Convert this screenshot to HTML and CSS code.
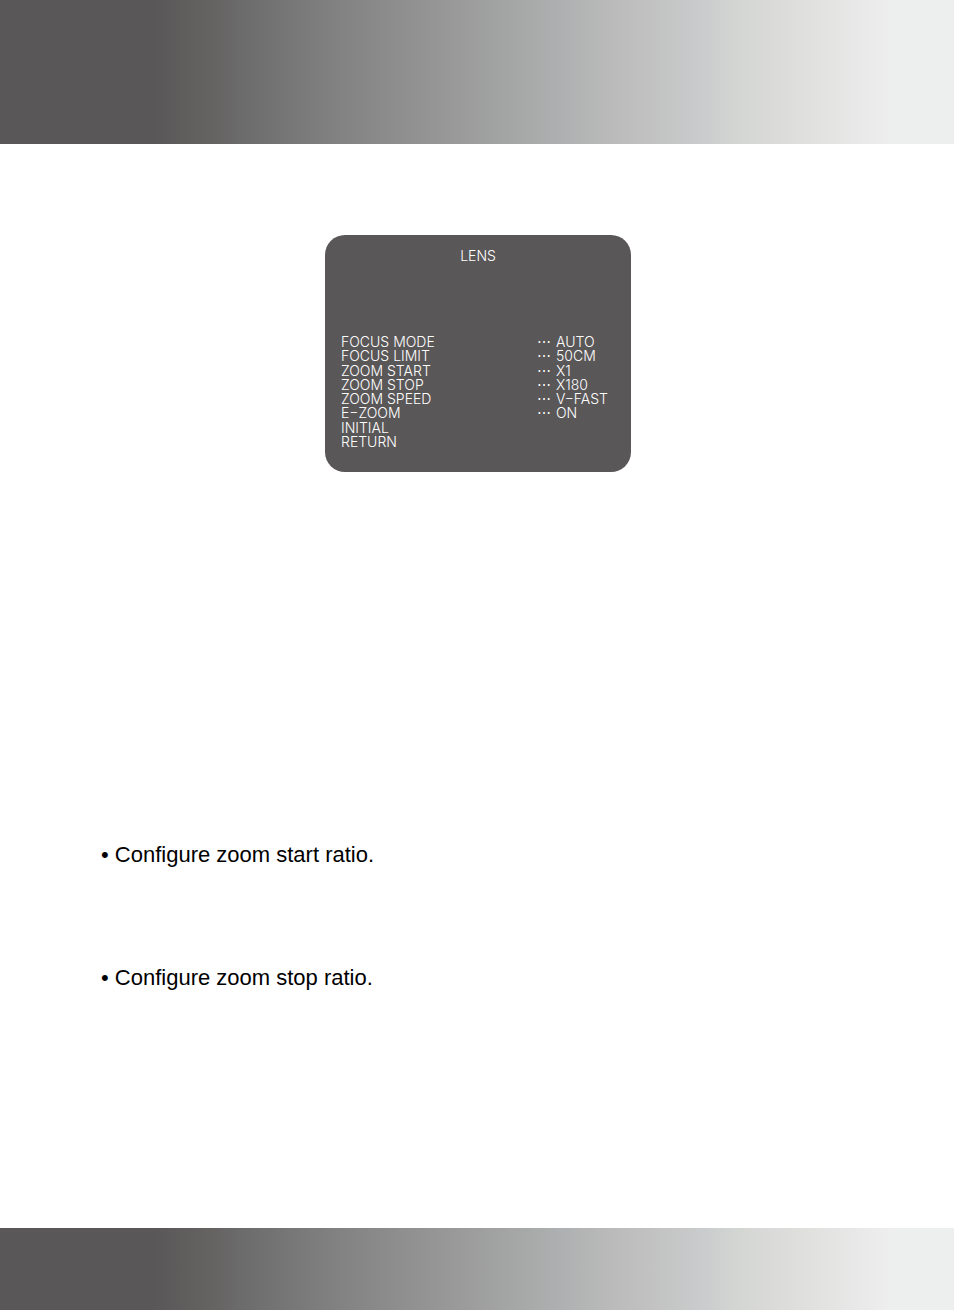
FILE: index.html
```html
<!DOCTYPE html>
<html lang="en">
<head>
  <meta charset="UTF-8" />
  <meta name="viewport" content="width=device-width, initial-scale=1.0" />
  <title>Lens</title>
  <link rel="stylesheet" href="styles.css">
</head>
<body>
  <header class="band band-top"></header>

  <main class="page">
    <section class="menu">
      <h1 class="menu-title">LENS</h1>
      <table class="menu-table">
        <tr><th scope="row">FOCUS MODE</th><td class="dots">⋯</td><td>AUTO</td></tr>
        <tr><th scope="row">FOCUS LIMIT</th><td class="dots">⋯</td><td>50CM</td></tr>
        <tr><th scope="row">ZOOM START</th><td class="dots">⋯</td><td>X1</td></tr>
        <tr><th scope="row">ZOOM STOP</th><td class="dots">⋯</td><td>X180</td></tr>
        <tr><th scope="row">ZOOM SPEED</th><td class="dots">⋯</td><td>V−FAST</td></tr>
        <tr><th scope="row">E−ZOOM</th><td class="dots">⋯</td><td>ON</td></tr>
        <tr><th scope="row">INITIAL</th><td></td><td></td></tr>
        <tr><th scope="row">RETURN</th><td></td><td></td></tr>
      </table>
    </section>

    <div class="notes">
      <p>• Configure zoom start ratio.</p>
      <p>• Configure zoom stop ratio.</p>
    </div>
  </main>

  <footer class="band band-bottom"></footer>
</body>
</html>
```
FILE: styles.css
```css
body {
  margin: 0;
  min-height: 100vh;
  display: flex;
  flex-direction: column;
  background: white;
  color: black;
  font-family: "Liberation Sans", Arial, sans-serif;
}
.band {
  background: linear-gradient(to right,
    #5a5758 0%,
    #5a5758 16%,
    #676464 23%,
    #6b6b6b 25%,
    #838383 36%,
    #989898 47%,
    #a9aaaa 56%,
    #afb0b1 59%,
    #bcbcbc 65%,
    #cbcccd 74%,
    #d3d5d3 77%,
    #dfdfde 84%,
    #edecec 92%,
    #edefee 94%,
    #edefee 100%);
}
.band-top {
  height: 144px;
}
.band-bottom {
  height: 82px;
}
.page {
  flex: 1;
  padding: 91px 99px 0 101px;
}
.menu {
  box-sizing: border-box;
  width: 306px;
  margin: 0 auto;
  padding: 14px 16px 23px;
  border-radius: 20px;
  background: #5a5758;
  color: white;
  font-family: Inter, sans-serif;
  font-size: 14px;
  font-weight: 300;
  line-height: 14px;
}
.menu-title {
  margin: 0 0 72px;
  font-size: 14px;
  font-weight: 300;
  text-align: center;
}
.menu-table {
  width: 100%;
  height: 114px;
  border-collapse: collapse;
}
.menu-table th,
.menu-table td {
  padding: 0;
  font-weight: 300;
  text-align: left;
  white-space: nowrap;
}
.menu-table td:last-child {
  width: 59px;
}
.menu-table .dots {
  width: 19px;
}
.notes {
  margin-top: 370px;
}
.notes p {
  margin: 0 0 97px;
  font-size: 22px;
  line-height: 26px;
}
```
